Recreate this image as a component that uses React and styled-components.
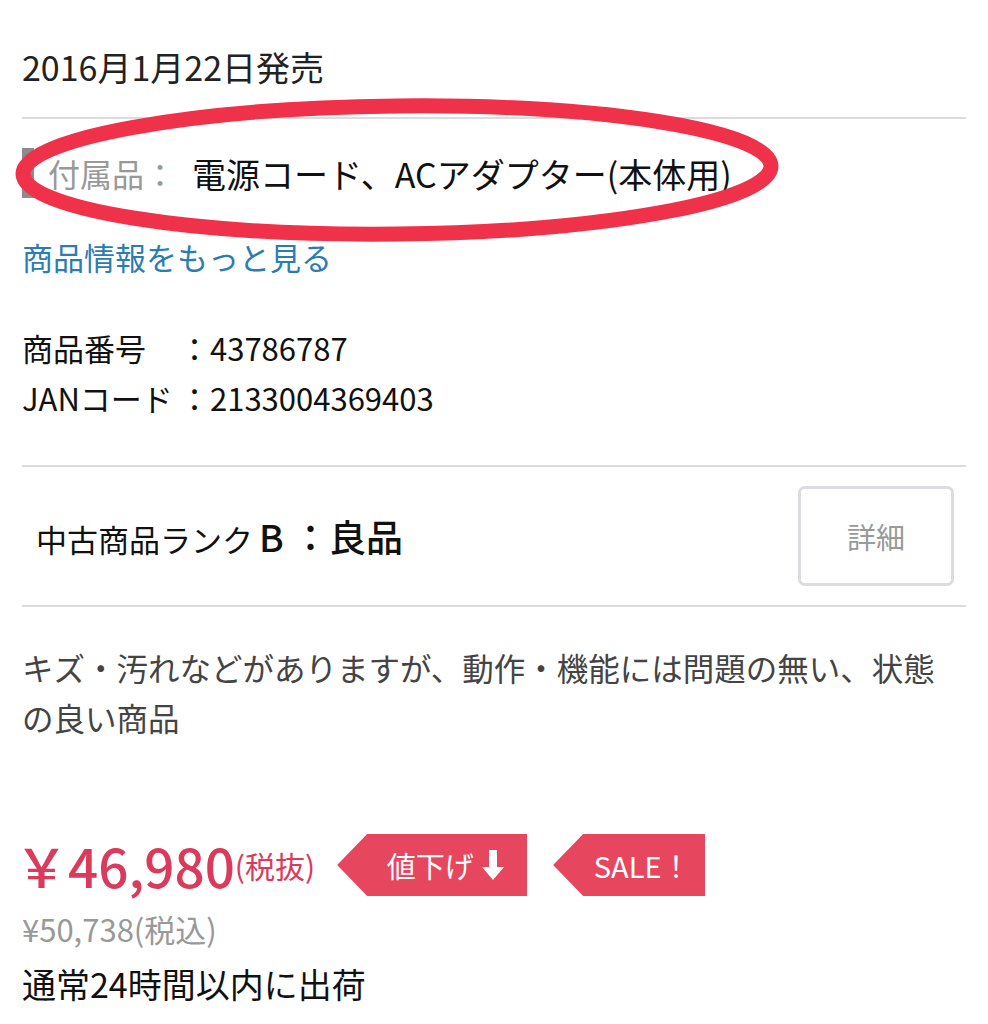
import React from "react"
import styled, { createGlobalStyle } from "styled-components"

const Global = createGlobalStyle`
  body {
    margin: 0;
    background: #fff;
    font-family: "Noto Sans CJK JP", "Noto Sans", sans-serif;
    color: #222;
  }
`

const Page = styled.div`
  position: relative;
  width: 988px;
  height: 1024px;
  overflow: hidden;
  padding: 0 22px;
  box-sizing: border-box;
`

const Release = styled.div`
  font-size: 34px;
  line-height: 1;
  padding-top: 50px;
  padding-bottom: 33px;
  border-bottom: 2px solid #dcdcdf;
`

const AccessoryRow = styled.div`
  display: flex;
  align-items: center;
  height: 108px;
`

const Marker = styled.span`
  width: 12px;
  height: 50px;
  background: #8c8c8c;
  margin-right: 14px;
`

const AccLabel = styled.span`
  font-size: 32px;
  color: #999;
  margin-right: 16px;
`

const AccValue = styled.span`
  font-size: 34px;
  color: #111;
`

const MoreLink = styled.a`
  display: block;
  font-size: 31px;
  line-height: 1;
  color: #2c7cb4;
  text-decoration: none;
  margin-top: 14px;
`

const Codes = styled.div`
  display: grid;
  grid-template-columns: 157px auto;
  row-gap: 10px;
  font-size: 31px;
  line-height: 40px;
  padding-top: 56px;
  padding-bottom: 47px;
  border-bottom: 2px solid #dcdcdf;
  color: #111;
`

const RankRow = styled.div`
  display: flex;
  align-items: center;
  justify-content: space-between;
  height: 138px;
  border-bottom: 2px solid #dcdcdf;
  padding-left: 14px;
  padding-right: 12px;
`

const RankText = styled.div`
  font-size: 31px;
  color: #111;
`

const RankGrade = styled.span`
  font-size: 37px;
  font-weight: 500;
  margin-left: 6px;
`

const DetailButton = styled.button`
  width: 156px;
  height: 100px;
  border: 3px solid #dcdce0;
  border-radius: 7px;
  background: #fff;
  font-family: inherit;
  font-size: 29px;
  color: #999;
`

const Description = styled.p`
  margin: 0;
  padding-top: 35px;
  font-size: 31.5px;
  line-height: 50px;
  color: #444;
`

const PriceRow = styled.div`
  display: flex;
  align-items: center;
  margin-top: 92px;
`

const Price = styled.span`
  font-size: 53px;
  font-weight: 500;
  color: #da3a5c;
  line-height: 1;
`

const Yen = styled.span`
  margin-left: -7px;
  margin-right: 0;
`

const TaxNote = styled.span`
  font-size: 30px;
  color: #da3a5c;
  margin-right: 22px;
`

const Tag = styled.span`
  display: inline-flex;
  align-items: center;
  justify-content: center;
  gap: 8px;
  height: 62px;
  width: ${p => p.w}px;
  padding-left: 26px;
  box-sizing: border-box;
  margin-right: 26px;
  background: #e6475f;
  color: #fff;
  font-size: 29px;
  clip-path: polygon(30px 0, 100% 0, 100% 100%, 30px 100%, 0 50%);
`

const TaxIn = styled.div`
  font-size: 31px;
  color: #999;
  margin-top: 10px;
`

const Shipping = styled.div`
  font-size: 34px;
  color: #111;
  margin-top: 8px;
`

const Annotation = styled.svg`
  position: absolute;
  left: 0;
  top: 0;
  pointer-events: none;
`

const ArrowDown = () => (
  <svg width="22" height="30" viewBox="0 0 22 30">
    <path d="M7 0h8v17h7L11 30 0 17h7z" fill="#fff" />
  </svg>
)

export default function App() {
  return (
    <Page>
      <Global />
      <Release>2016月1月22日発売</Release>
      <AccessoryRow>
        <Marker />
        <AccLabel>付属品：</AccLabel>
        <AccValue>電源コード、ACアダプター(本体用)</AccValue>
      </AccessoryRow>
      <MoreLink href="#">商品情報をもっと見る</MoreLink>
      <Codes>
        <span>商品番号</span>
        <span>：43786787</span>
        <span>JANコード</span>
        <span>：2133004369403</span>
      </Codes>
      <RankRow>
        <RankText>
          中古商品ランク<RankGrade>B ：良品</RankGrade>
        </RankText>
        <DetailButton>詳細</DetailButton>
      </RankRow>
      <Description>
        キズ・汚れなどがありますが、動作・機能には問題の無い、状態の良い商品
      </Description>
      <PriceRow>
        <Price>
          <Yen>￥</Yen>46,980
        </Price>
        <TaxNote>(税抜)</TaxNote>
        <Tag w={190}>
          値下げ <ArrowDown />
        </Tag>
        <Tag w={152}>SALE！</Tag>
      </PriceRow>
      <TaxIn>¥50,738(税込)</TaxIn>
      <Shipping>通常24時間以内に出荷</Shipping>
      <Annotation width="988" height="300" viewBox="0 0 988 300">
        <ellipse
          cx="397"
          cy="170"
          rx="374"
          ry="64"
          fill="none"
          stroke="#ef3249"
          strokeWidth="15"
          transform="rotate(-0.6 397 170)"
        />
      </Annotation>
    </Page>
  )
}
